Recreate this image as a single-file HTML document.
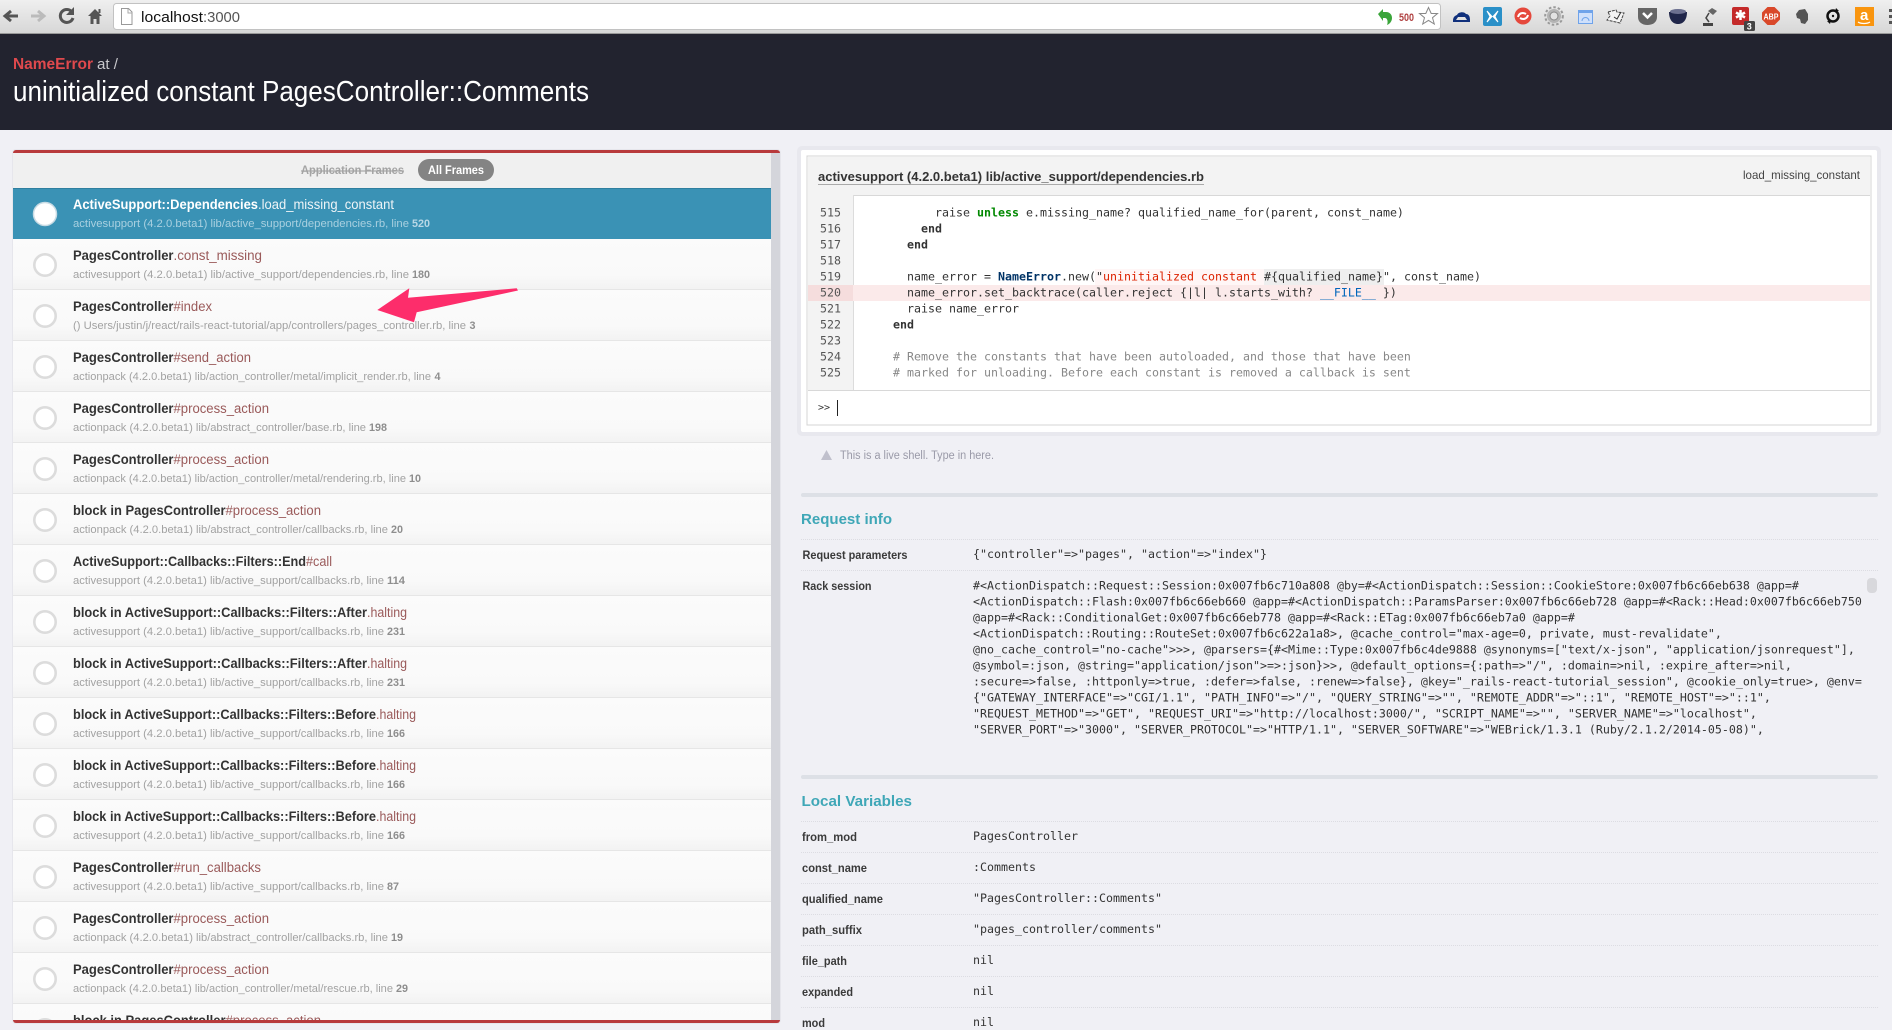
<!DOCTYPE html>
<html><head><meta charset="utf-8"><title>NameError</title>
<style>
html,body{margin:0;padding:0;background:#f0f0f5;overflow:hidden;width:1892px;height:1030px}
svg{display:block;filter:blur(.3px)}
text{font-family:"Liberation Sans",sans-serif}
.m text,text.m{font-family:"DejaVu Sans Mono",monospace;font-size:11.63px;fill:#333}
.n{font-size:13.5px;font-weight:bold;fill:#333}
.f{font-size:13.5px;fill:#9a5a5a}
.s{font-size:11px;fill:#a2a2a2}
.b{font-size:11px;font-weight:bold;fill:#8e8e8e}
.l{font-size:11.5px;font-weight:bold;fill:#3a3a3a}
.g{fill:#080;font-weight:bold}
.c{fill:#888}
</style></head><body>
<svg width="1892" height="1030" viewBox="0 0 1892 1030" xmlns="http://www.w3.org/2000/svg">
<defs>
<linearGradient id="tb" x1="0" y1="0" x2="0" y2="1"><stop offset="0" stop-color="#efefef"/><stop offset="1" stop-color="#d6d6d6"/></linearGradient>
<linearGradient id="rw" x1="0" y1="0" x2="0" y2="1"><stop offset="0" stop-color="#fbfbfb"/><stop offset=".7" stop-color="#f9f9f9"/><stop offset="1" stop-color="#f2f2f2"/></linearGradient>
<clipPath id="pc"><rect x="13" y="153" width="758" height="867"/></clipPath>
<g id="row"><rect x="13" y="0" width="758" height="51" fill="url(#rw)"/><rect x="13" y="50" width="758" height="1" fill="#e6e6e6"/><circle cx="45" cy="26" r="10.7" fill="#fff" stroke="#dcdcdc" stroke-width="2.6"/></g>
</defs>
<rect width="1892" height="1030" fill="#f0f0f5"/>

<!-- toolbar -->
<rect width="1892" height="34" fill="url(#tb)"/>
<rect y="33" width="1892" height="1" fill="#999"/>
<rect x="113.5" y="3.5" width="1327" height="26" rx="3" fill="#fff" stroke="#c2c2c2"/>
<path d="M18 16H7M11 11l-6 5 6 5" fill="none" stroke="#555" stroke-width="3"/>
<path d="M31 16h11M38 11l6 5-6 5" fill="none" stroke="#bbb" stroke-width="3"/>
<path d="M72 12a6.5 6.5 0 1 0 1 6" fill="none" stroke="#555" stroke-width="3"/><path d="M74 7v8h-8z" fill="#555"/>
<path d="M95 9l-7 7h2.500v8h3v-5h3v5h3v-8H102z" fill="#555"/><rect x="98.500" y="9" width="2" height="4" fill="#555"/>
<path d="M121.500 8.500h7l3.500 3.500v12.500h-10.500z" fill="#fff" stroke="#999"/><path d="M128 9v4h4" fill="none" stroke="#aaa"/>
<text x="141" y="22" font-size="15" fill="#111" textLength="62" lengthAdjust="spacingAndGlyphs">localhost</text>
<text x="203" y="22" font-size="15" fill="#555" textLength="37" lengthAdjust="spacingAndGlyphs">:3000</text>
<path d="M1378 14l5-5v3h3c4 0 6 3 6 6 0 3-2 6-5 7 1-2 1-7-2-7h-2v3z" fill="#3aa53a"/>
<text x="1399" y="21" font-size="11" font-weight="bold" fill="#b04040" textLength="15" lengthAdjust="spacingAndGlyphs">500</text>
<path d="M1428.500 7.500l2.700 6h6.300l-5 4.200 1.800 6.300-5.800-3.600-5.800 3.600 1.800-6.300-5-4.200h6.300z" fill="#fff" stroke="#888"/>
<path d="M1453 21c0-3 1-5 4-6 1-3 7-4 9-1 3 0 4 3 4 6v2h-17zM1458 17h7l2 3h-11z" fill="#10307c" fill-rule="evenodd"/>
<rect x="1483" y="7" width="19" height="19" rx="2" fill="#2a90c8"/><path d="M1487 11l5 5.500-5 5.500 3-5.500zM1498 11l-5 5.500 5 5.500-3-5.500z" fill="#fff" stroke="#fff"/>
<circle cx="1523" cy="16" r="8.500" fill="#e5483c"/><path d="M1518 17c1-4 5-5 8-3M1528 15c-1 4-5 5-8 3" fill="none" stroke="#fff" stroke-width="2"/>
<circle cx="1554" cy="16" r="8.800" fill="none" stroke="#999" stroke-width="2" stroke-dasharray="2.500 2"/><circle cx="1554" cy="16" r="7" fill="#b4b4b4"/><circle cx="1554" cy="16" r="4" fill="#e2e2e2" stroke="#888"/>
<rect x="1578.500" y="10.500" width="14" height="13" fill="#cfe0fb" stroke="#6fa3ea"/><rect x="1578" y="10" width="15" height="3" fill="#6fa3ea"/><path d="M1582 21a3.500 3.500 0 0 1 7 0" fill="none" stroke="#6fa3ea"/>
<path d="M1608 12l8-2 1 2 7 1-4 10-13-3 3-4z" fill="#f4f4f4" stroke="#444" stroke-dasharray="3 1"/><path d="M1614 17l3 2 4-7" fill="none" stroke="#333"/>
<path d="M1638 8h19v9c0 5-4 8-9.500 8s-9.500-3-9.500-8z" fill="#666"/><path d="M1643 13l4.500 4.500 4.500-4.500" fill="none" stroke="#fff" stroke-width="2.500"/>
<path d="M1669 12h18c0 7-3 12-9 12s-9-5-9-12z" fill="#20264a"/><ellipse cx="1678" cy="11.500" rx="8" ry="2.500" fill="#6c7090"/>
<path d="M1708 11l4-3 5 3-4 4z" fill="#666"/><path d="M1709 13l-3 5 3 4" fill="none" stroke="#444" stroke-width="1.500"/><path d="M1703 26v-3h10v3z" fill="#444"/>
<rect x="1732" y="7" width="17" height="18" rx="2" fill="#c42a2a"/><path d="M1740.500 10v10M1736 12.500l9 5M1745 12.500l-9 5" stroke="#fff" stroke-width="2.500"/>
<rect x="1744" y="21" width="11" height="10" rx="1.500" fill="#444"/><text x="1746.800" y="29.500" font-size="9" font-weight="bold" fill="#fff">3</text>
<path d="M1767.500 7h7l5.500 5.500v7l-5.500 5.500h-7l-5.500-5.500v-7z" fill="#d9482a"/><text x="1763.500" y="19.500" font-size="8" font-weight="bold" fill="#fff" textLength="15" lengthAdjust="spacingAndGlyphs">ABP</text>
<path d="M1799 10l6-1 3 5v6l-3 4-4-1-1-4-3-1-1-4z" fill="#555"/>
<circle cx="1833" cy="16" r="5.500" fill="none" stroke="#111" stroke-width="2.500"/><circle cx="1833" cy="16" r="1.200" fill="#111"/><path d="M1836 8l3 3-4 1zM1830 24l-3-3 4-1z" fill="#111"/>
<rect x="1855" y="7" width="19" height="19" fill="#f9950f"/><text x="1860" y="20" font-size="15" font-weight="bold" fill="#fff">a</text><path d="M1858 22c3 2 9 2 12 0" fill="none" stroke="#fff" stroke-width="1.200"/>
<rect x="1889" y="9" width="3" height="3" fill="#555"/><rect x="1889" y="15" width="3" height="3" fill="#555"/><rect x="1889" y="21" width="3" height="3" fill="#555"/>

<!-- header -->
<rect y="34" width="1892" height="96" fill="#22232f"/>
<text x="13" y="69" font-size="16" font-weight="bold" fill="#e0494d" textLength="80" lengthAdjust="spacingAndGlyphs">NameError</text>
<text x="97" y="69" font-size="15" fill="#c8c8cc" textLength="21" lengthAdjust="spacingAndGlyphs">at /</text>
<text x="13" y="101" font-size="28.500" fill="#fff" textLength="576" lengthAdjust="spacingAndGlyphs">uninitialized constant PagesController::Comments</text>

<!-- left panel -->
<rect x="12" y="149" width="769" height="875" rx="4" fill="#e6e6ec"/>
<rect x="13" y="150" width="767" height="873" rx="3" fill="#b83a3c"/>
<rect x="13" y="153" width="758" height="35" fill="#f0f0f0"/>
<rect x="771" y="153" width="9" height="867" fill="#d4d5db"/>
<text x="301" y="174" font-size="11.500" font-weight="bold" fill="#a4a4a4" text-decoration="line-through" textLength="103" lengthAdjust="spacingAndGlyphs">Application Frames</text>
<rect x="418" y="159" width="76" height="22" rx="11" fill="#848484"/>
<text x="428" y="174" font-size="11.500" font-weight="bold" fill="#fff" textLength="56" lengthAdjust="spacingAndGlyphs">All Frames</text>

<g clip-path="url(#pc)">
<g transform="translate(0,188)"><rect x="13" y="0" width="758" height="51" fill="#3a92b5"/><rect x="13" y="0" width="758" height="1" fill="#2f7f9f"/><circle cx="45" cy="26" r="11.500" fill="#fff" stroke="#c8dbe4" stroke-width="1.500"/>
<text x="73" y="21" class="n" style="fill:#fff" textLength="185" lengthAdjust="spacingAndGlyphs">ActiveSupport::Dependencies</text><text x="258" y="21" class="f" style="fill:#eef4f7" textLength="136" lengthAdjust="spacingAndGlyphs">.load_missing_constant</text>
<text x="73" y="39" class="s" style="fill:#a9d0e0" textLength="336" lengthAdjust="spacingAndGlyphs">activesupport (4.2.0.beta1) lib/active_support/dependencies.rb, line</text><text x="412" y="39" class="b" style="fill:#b8d8e6" textLength="18" lengthAdjust="spacingAndGlyphs">520</text></g>

<g transform="translate(0,239)"><use href="#row"/><text x="73" y="21" class="n" textLength="100.500" lengthAdjust="spacingAndGlyphs">PagesController</text><text x="173.500" y="21" class="f" textLength="88.500" lengthAdjust="spacingAndGlyphs">.const_missing</text>
<text x="73" y="39" class="s" textLength="336" lengthAdjust="spacingAndGlyphs">activesupport (4.2.0.beta1) lib/active_support/dependencies.rb, line</text><text x="412" y="39" class="b" textLength="18" lengthAdjust="spacingAndGlyphs">180</text></g>

<g transform="translate(0,290)"><use href="#row"/><text x="73" y="21" class="n" textLength="100.500" lengthAdjust="spacingAndGlyphs">PagesController</text><text x="173.500" y="21" class="f" textLength="38.500" lengthAdjust="spacingAndGlyphs">#index</text>
<text x="73" y="39" class="s" textLength="393" lengthAdjust="spacingAndGlyphs">() Users/justin/j/react/rails-react-tutorial/app/controllers/pages_controller.rb, line</text><text x="469.500" y="39" class="b" textLength="6" lengthAdjust="spacingAndGlyphs">3</text></g>

<g transform="translate(0,341)"><use href="#row"/><text x="73" y="21" class="n" textLength="100.500" lengthAdjust="spacingAndGlyphs">PagesController</text><text x="173.500" y="21" class="f" textLength="77.500" lengthAdjust="spacingAndGlyphs">#send_action</text>
<text x="73" y="39" class="s" textLength="358" lengthAdjust="spacingAndGlyphs">actionpack (4.2.0.beta1) lib/action_controller/metal/implicit_render.rb, line</text><text x="434.500" y="39" class="b" textLength="6" lengthAdjust="spacingAndGlyphs">4</text></g>

<g transform="translate(0,392)"><use href="#row"/><text x="73" y="21" class="n" textLength="100.500" lengthAdjust="spacingAndGlyphs">PagesController</text><text x="173.500" y="21" class="f" textLength="95.500" lengthAdjust="spacingAndGlyphs">#process_action</text>
<text x="73" y="39" class="s" textLength="293" lengthAdjust="spacingAndGlyphs">actionpack (4.2.0.beta1) lib/abstract_controller/base.rb, line</text><text x="369" y="39" class="b" textLength="18" lengthAdjust="spacingAndGlyphs">198</text></g>

<g transform="translate(0,443)"><use href="#row"/><text x="73" y="21" class="n" textLength="100.500" lengthAdjust="spacingAndGlyphs">PagesController</text><text x="173.500" y="21" class="f" textLength="95.500" lengthAdjust="spacingAndGlyphs">#process_action</text>
<text x="73" y="39" class="s" textLength="333" lengthAdjust="spacingAndGlyphs">actionpack (4.2.0.beta1) lib/action_controller/metal/rendering.rb, line</text><text x="409" y="39" class="b" textLength="12" lengthAdjust="spacingAndGlyphs">10</text></g>

<g transform="translate(0,494)"><use href="#row"/><text x="73" y="21" class="n" textLength="152.500" lengthAdjust="spacingAndGlyphs">block in PagesController</text><text x="225.500" y="21" class="f" textLength="95.500" lengthAdjust="spacingAndGlyphs">#process_action</text>
<text x="73" y="39" class="s" textLength="315" lengthAdjust="spacingAndGlyphs">actionpack (4.2.0.beta1) lib/abstract_controller/callbacks.rb, line</text><text x="391" y="39" class="b" textLength="12" lengthAdjust="spacingAndGlyphs">20</text></g>

<g transform="translate(0,545)"><use href="#row"/><text x="73" y="21" class="n" textLength="233" lengthAdjust="spacingAndGlyphs">ActiveSupport::Callbacks::Filters::End</text><text x="306" y="21" class="f" textLength="26" lengthAdjust="spacingAndGlyphs">#call</text>
<text x="73" y="39" class="s" textLength="311" lengthAdjust="spacingAndGlyphs">activesupport (4.2.0.beta1) lib/active_support/callbacks.rb, line</text><text x="387" y="39" class="b" textLength="18" lengthAdjust="spacingAndGlyphs">114</text></g>

<g transform="translate(0,596)"><use href="#row"/><text x="73" y="21" class="n" textLength="294" lengthAdjust="spacingAndGlyphs">block in ActiveSupport::Callbacks::Filters::After</text><text x="367" y="21" class="f" textLength="40" lengthAdjust="spacingAndGlyphs">.halting</text>
<text x="73" y="39" class="s" textLength="311" lengthAdjust="spacingAndGlyphs">activesupport (4.2.0.beta1) lib/active_support/callbacks.rb, line</text><text x="387" y="39" class="b" textLength="18" lengthAdjust="spacingAndGlyphs">231</text></g>

<g transform="translate(0,647)"><use href="#row"/><text x="73" y="21" class="n" textLength="294" lengthAdjust="spacingAndGlyphs">block in ActiveSupport::Callbacks::Filters::After</text><text x="367" y="21" class="f" textLength="40" lengthAdjust="spacingAndGlyphs">.halting</text>
<text x="73" y="39" class="s" textLength="311" lengthAdjust="spacingAndGlyphs">activesupport (4.2.0.beta1) lib/active_support/callbacks.rb, line</text><text x="387" y="39" class="b" textLength="18" lengthAdjust="spacingAndGlyphs">231</text></g>

<g transform="translate(0,698)"><use href="#row"/><text x="73" y="21" class="n" textLength="303" lengthAdjust="spacingAndGlyphs">block in ActiveSupport::Callbacks::Filters::Before</text><text x="376" y="21" class="f" textLength="40" lengthAdjust="spacingAndGlyphs">.halting</text>
<text x="73" y="39" class="s" textLength="311" lengthAdjust="spacingAndGlyphs">activesupport (4.2.0.beta1) lib/active_support/callbacks.rb, line</text><text x="387" y="39" class="b" textLength="18" lengthAdjust="spacingAndGlyphs">166</text></g>

<g transform="translate(0,749)"><use href="#row"/><text x="73" y="21" class="n" textLength="303" lengthAdjust="spacingAndGlyphs">block in ActiveSupport::Callbacks::Filters::Before</text><text x="376" y="21" class="f" textLength="40" lengthAdjust="spacingAndGlyphs">.halting</text>
<text x="73" y="39" class="s" textLength="311" lengthAdjust="spacingAndGlyphs">activesupport (4.2.0.beta1) lib/active_support/callbacks.rb, line</text><text x="387" y="39" class="b" textLength="18" lengthAdjust="spacingAndGlyphs">166</text></g>

<g transform="translate(0,800)"><use href="#row"/><text x="73" y="21" class="n" textLength="303" lengthAdjust="spacingAndGlyphs">block in ActiveSupport::Callbacks::Filters::Before</text><text x="376" y="21" class="f" textLength="40" lengthAdjust="spacingAndGlyphs">.halting</text>
<text x="73" y="39" class="s" textLength="311" lengthAdjust="spacingAndGlyphs">activesupport (4.2.0.beta1) lib/active_support/callbacks.rb, line</text><text x="387" y="39" class="b" textLength="18" lengthAdjust="spacingAndGlyphs">166</text></g>

<g transform="translate(0,851)"><use href="#row"/><text x="73" y="21" class="n" textLength="100.500" lengthAdjust="spacingAndGlyphs">PagesController</text><text x="173.500" y="21" class="f" textLength="87.500" lengthAdjust="spacingAndGlyphs">#run_callbacks</text>
<text x="73" y="39" class="s" textLength="311" lengthAdjust="spacingAndGlyphs">activesupport (4.2.0.beta1) lib/active_support/callbacks.rb, line</text><text x="387" y="39" class="b" textLength="12" lengthAdjust="spacingAndGlyphs">87</text></g>

<g transform="translate(0,902)"><use href="#row"/><text x="73" y="21" class="n" textLength="100.500" lengthAdjust="spacingAndGlyphs">PagesController</text><text x="173.500" y="21" class="f" textLength="95.500" lengthAdjust="spacingAndGlyphs">#process_action</text>
<text x="73" y="39" class="s" textLength="315" lengthAdjust="spacingAndGlyphs">actionpack (4.2.0.beta1) lib/abstract_controller/callbacks.rb, line</text><text x="391" y="39" class="b" textLength="12" lengthAdjust="spacingAndGlyphs">19</text></g>

<g transform="translate(0,953)"><use href="#row"/><text x="73" y="21" class="n" textLength="100.500" lengthAdjust="spacingAndGlyphs">PagesController</text><text x="173.500" y="21" class="f" textLength="95.500" lengthAdjust="spacingAndGlyphs">#process_action</text>
<text x="73" y="39" class="s" textLength="320" lengthAdjust="spacingAndGlyphs">actionpack (4.2.0.beta1) lib/action_controller/metal/rescue.rb, line</text><text x="396" y="39" class="b" textLength="12" lengthAdjust="spacingAndGlyphs">29</text></g>

<g transform="translate(0,1004)"><use href="#row"/><text x="73" y="21" class="n" textLength="152.500" lengthAdjust="spacingAndGlyphs">block in PagesController</text><text x="225.500" y="21" class="f" textLength="95.500" lengthAdjust="spacingAndGlyphs">#process_action</text></g>
</g>

<!-- pink arrow -->
<path d="M377.300 310L409.300 288.300 408 297.700 516.700 288.300 518 290.500 416.700 312.300 414 322.300z" fill="#fd2d6b"/>

<!-- code card -->
<rect x="797" y="146" width="1084" height="290" rx="5" fill="#e8e8ee"/>
<rect x="801" y="150" width="1076" height="282" rx="2" fill="#fff"/>
<rect x="807" y="156" width="1064" height="269" fill="#fff" stroke="#d4d4d4" stroke-width="1"/>
<rect x="808" y="157" width="1062" height="39" fill="#f3f3f3"/>
<rect x="808" y="196" width="45" height="194" fill="#f3f3f3"/>
<rect x="853" y="195" width="1017" height="1" fill="#d8d8d8"/>
<rect x="853" y="195" width="1" height="195" fill="#dcdcdc"/>
<rect x="808" y="285" width="1062" height="16" fill="#fbeaea"/>
<rect x="808" y="285" width="45" height="16" fill="#f5dddd"/>
<rect x="808" y="390" width="1062" height="1" fill="#d8d8d8"/>
<text x="818" y="181" font-size="13" font-weight="bold" fill="#333" textLength="386" lengthAdjust="spacingAndGlyphs">activesupport (4.2.0.beta1) lib/active_support/dependencies.rb</text>
<rect x="818" y="184" width="386" height="1" fill="#aaa"/>
<text x="1743" y="179" font-size="12" fill="#444" textLength="117" lengthAdjust="spacingAndGlyphs">load_missing_constant</text>

<rect x="1095" y="269" width="289" height="16" fill="#fff6f6"/>
<rect x="1264" y="269" width="120" height="16" fill="#eee"/>
<g class="m" transform="translate(0,-.5)">
<text x="820" y="217" style="fill:#555">515</text><text x="820" y="233" style="fill:#555">516</text><text x="820" y="249" style="fill:#555">517</text><text x="820" y="265" style="fill:#555">518</text><text x="820" y="281" style="fill:#555">519</text><text x="820" y="297" style="fill:#555">520</text><text x="820" y="313" style="fill:#555">521</text><text x="820" y="329" style="fill:#555">522</text><text x="820" y="345" style="fill:#555">523</text><text x="820" y="361" style="fill:#555">524</text><text x="820" y="377" style="fill:#555">525</text>
<text x="935" y="217">raise <tspan class="g">unless</tspan> e.missing_name? qualified_name_for(parent, const_name)</text>
<text x="921" y="233" class="g">end</text>
<text x="907" y="249" class="g">end</text>
<text x="907" y="281">name_error = <tspan style="font-weight:bold;fill:#036">NameError</tspan>.new(&quot;<tspan style="fill:#d20">uninitialized constant </tspan>#{qualified_name}&quot;, const_name)</text>
<text x="907" y="297">name_error.set_backtrace(caller.reject {|l| l.starts_with? <tspan style="fill:#06b">__FILE__</tspan> })</text>
<text x="907" y="313">raise name_error</text>
<text x="893" y="329" class="g">end</text>
<text x="893" y="361" class="c" style="fill:#888"># Remove the constants that have been autoloaded, and those that have been</text>
<text x="893" y="377" class="c" style="fill:#888"># marked for unloading. Before each constant is removed a callback is sent</text>
<text x="818" y="411" style="font-size:10px">&gt;&gt;</text>
</g>
<rect x="837" y="400" width="1" height="16" fill="#222"/>

<path d="M826.500 450l5.500 10h-11z" fill="#c0c0cc"/>
<text x="840" y="459" font-size="11.500" fill="#9a9aa8" textLength="154" lengthAdjust="spacingAndGlyphs">This is a live shell. Type in here.</text>

<!-- request info -->
<rect x="801" y="493" width="1077" height="4" rx="2" fill="#dde0e6"/>
<text x="801" y="524" font-size="15" font-weight="bold" fill="#3fa7b7" textLength="91" lengthAdjust="spacingAndGlyphs">Request info</text>
<line x1="801" y1="539.500" x2="1878" y2="539.500" stroke="#dcdce2" stroke-dasharray="1 1"/>
<line x1="801" y1="570.500" x2="1878" y2="570.500" stroke="#dcdce2" stroke-dasharray="1 1"/>
<text x="802.500" y="559" class="l" textLength="105" lengthAdjust="spacingAndGlyphs">Request parameters</text>
<text x="802.500" y="590" class="l" textLength="69" lengthAdjust="spacingAndGlyphs">Rack session</text>
<rect x="1867" y="578" width="10" height="15" rx="4" fill="#d8d8dc"/>
<g class="m">
<text x="973" y="558">{&quot;controller&quot;=&gt;&quot;pages&quot;, &quot;action&quot;=&gt;&quot;index&quot;}</text>
<text x="973" y="589.500">#&lt;ActionDispatch::Request::Session:0x007fb6c710a808 @by=#&lt;ActionDispatch::Session::CookieStore:0x007fb6c66eb638 @app=#</text>
<text x="973" y="605.500">&lt;ActionDispatch::Flash:0x007fb6c66eb660 @app=#&lt;ActionDispatch::ParamsParser:0x007fb6c66eb728 @app=#&lt;Rack::Head:0x007fb6c66eb750</text>
<text x="973" y="621.500">@app=#&lt;Rack::ConditionalGet:0x007fb6c66eb778 @app=#&lt;Rack::ETag:0x007fb6c66eb7a0 @app=#</text>
<text x="973" y="637.500">&lt;ActionDispatch::Routing::RouteSet:0x007fb6c622a1a8&gt;, @cache_control=&quot;max-age=0, private, must-revalidate&quot;,</text>
<text x="973" y="653.500">@no_cache_control=&quot;no-cache&quot;&gt;&gt;&gt;, @parsers={#&lt;Mime::Type:0x007fb6c4de9888 @synonyms=[&quot;text/x-json&quot;, &quot;application/jsonrequest&quot;],</text>
<text x="973" y="669.500">@symbol=:json, @string=&quot;application/json&quot;&gt;=&gt;:json}&gt;&gt;, @default_options={:path=&gt;&quot;/&quot;, :domain=&gt;nil, :expire_after=&gt;nil,</text>
<text x="973" y="685.500">:secure=&gt;false, :httponly=&gt;true, :defer=&gt;false, :renew=&gt;false}, @key=&quot;_rails-react-tutorial_session&quot;, @cookie_only=true&gt;, @env=</text>
<text x="973" y="701.500">{&quot;GATEWAY_INTERFACE&quot;=&gt;&quot;CGI/1.1&quot;, &quot;PATH_INFO&quot;=&gt;&quot;/&quot;, &quot;QUERY_STRING&quot;=&gt;&quot;&quot;, &quot;REMOTE_ADDR&quot;=&gt;&quot;::1&quot;, &quot;REMOTE_HOST&quot;=&gt;&quot;::1&quot;,</text>
<text x="973" y="717.500">&quot;REQUEST_METHOD&quot;=&gt;&quot;GET&quot;, &quot;REQUEST_URI&quot;=&gt;&quot;http://localhost:3000/&quot;, &quot;SCRIPT_NAME&quot;=&gt;&quot;&quot;, &quot;SERVER_NAME&quot;=&gt;&quot;localhost&quot;,</text>
<text x="973" y="733.500">&quot;SERVER_PORT&quot;=&gt;&quot;3000&quot;, &quot;SERVER_PROTOCOL&quot;=&gt;&quot;HTTP/1.1&quot;, &quot;SERVER_SOFTWARE&quot;=&gt;&quot;WEBrick/1.3.1 (Ruby/2.1.2/2014-05-08)&quot;,</text>
</g>

<!-- local variables -->
<rect x="801" y="775" width="1077" height="4" rx="2" fill="#dde0e6"/>
<text x="801.500" y="806" font-size="15" font-weight="bold" fill="#3fa7b7" textLength="110.500" lengthAdjust="spacingAndGlyphs">Local Variables</text>
<g stroke="#dcdce2" stroke-dasharray="1 1"><line x1="801" y1="821.500" x2="1878" y2="821.500"/><line x1="801" y1="852.500" x2="1878" y2="852.500"/><line x1="801" y1="883.500" x2="1878" y2="883.500"/><line x1="801" y1="914.500" x2="1878" y2="914.500"/><line x1="801" y1="945.500" x2="1878" y2="945.500"/><line x1="801" y1="976.500" x2="1878" y2="976.500"/><line x1="801" y1="1007.500" x2="1878" y2="1007.500"/></g>
<text x="802" y="841" class="l" textLength="55" lengthAdjust="spacingAndGlyphs">from_mod</text>
<text x="802" y="872" class="l" textLength="65" lengthAdjust="spacingAndGlyphs">const_name</text>
<text x="802" y="903" class="l" textLength="81" lengthAdjust="spacingAndGlyphs">qualified_name</text>
<text x="802" y="934" class="l" textLength="60" lengthAdjust="spacingAndGlyphs">path_suffix</text>
<text x="802" y="965" class="l" textLength="45" lengthAdjust="spacingAndGlyphs">file_path</text>
<text x="802" y="996" class="l" textLength="51" lengthAdjust="spacingAndGlyphs">expanded</text>
<text x="802" y="1027" class="l" textLength="23" lengthAdjust="spacingAndGlyphs">mod</text>
<g class="m">
<text x="973" y="840">PagesController</text>
<text x="973" y="871">:Comments</text>
<text x="973" y="902">&quot;PagesController::Comments&quot;</text>
<text x="973" y="933">&quot;pages_controller/comments&quot;</text>
<text x="973" y="964">nil</text>
<text x="973" y="995">nil</text>
<text x="973" y="1026">nil</text>
</g>
</svg>
</body></html>
